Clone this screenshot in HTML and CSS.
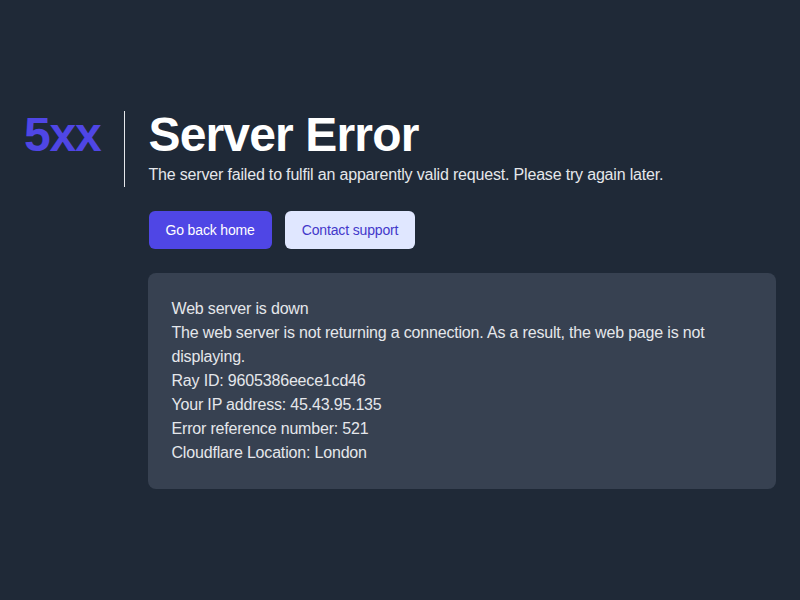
FILE: index.html
```html
<!DOCTYPE html>
<html lang="en">
<head>
  <meta charset="UTF-8" />
  <meta name="viewport" content="width=device-width, initial-scale=1.0" />
  <title>Server Error</title>
  <link rel="stylesheet" href="styles.css">
</head>
<body>

<main class="page">
  <p class="code">5xx</p>
  <div class="content">
    <div class="heading">
      <h1 class="title">Server Error</h1>
      <p class="subtitle">The server failed to fulfil an apparently valid request. Please try again later.</p>
    </div>
    <div class="actions">
      <a href="#" class="btn btn-primary">Go back home</a>
      <a href="#" class="btn btn-secondary">Contact support</a>
    </div>
    <div class="details">
      <p>Web server is down</p>
      <p>The web server is not returning a connection. As a result, the web page is not displaying.</p>
      <p>Ray ID: 9605386eece1cd46</p>
      <p>Your IP address: 45.43.95.135</p>
      <p>Error reference number: 521</p>
      <p>Cloudflare Location: London</p>
    </div>
  </div>
</main>

</body>
</html>
```

FILE: styles.css
```css
html, body {
  height: 100%;
}

body {
  margin: 0;
  background: #1f2937;
  font-family: 'Liberation Sans', Arial, sans-serif;
  letter-spacing: -0.18px;
  display: flex;
  flex-direction: column;
  justify-content: center;
}

.page {
  display: flex;
  padding: 0 24px;
}

.code {
  margin: 0;
  font-size: 48px;
  line-height: 1;
  font-weight: 800;
  letter-spacing: -0.025em;
  color: #4f46e5;
}

.content {
  flex: 1;
  margin-left: 23px;
}

.heading {
  border-left: 1px solid #e5e7eb;
  padding-left: 24px;
}

.title {
  margin: 0;
  font-size: 48px;
  line-height: 1;
  font-weight: 800;
  letter-spacing: -0.85px;
  color: #ffffff;
}

.subtitle {
  margin: 4px 0 0;
  font-size: 16px;
  line-height: 24px;
  color: #e5e7eb;
}

.actions {
  display: flex;
  gap: 13px;
  margin-top: 24px;
  padding-left: 25px;
}

.btn {
  display: inline-block;
  padding: 9px 16px;
  border: 1px solid transparent;
  border-radius: 6px;
  font-size: 14px;
  line-height: 18px;
  letter-spacing: -0.15px;
  text-decoration: none;
}

.btn-primary {
  background: #4f46e5;
  color: #ffffff;
}

.btn-secondary {
  background: #e0e7ff;
  color: #4338ca;
}

.details {
  margin: 24px 0 0 24px;
  padding: 24px;
  background: #374151;
  border-radius: 8px;
  color: #e5e7eb;
  font-size: 16px;
  line-height: 24px;
}

.details p {
  margin: 0;
}
```
